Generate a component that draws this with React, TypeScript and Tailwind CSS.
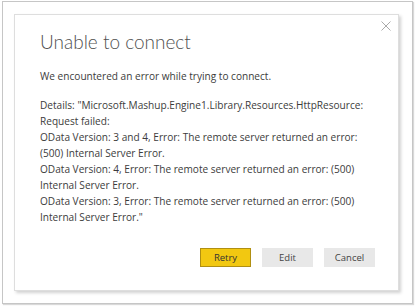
export default function App() {
    const details = [
        'Details: "Microsoft.Mashup.Engine1.Library.Resources.HttpResource:',
        'Request failed:',
        'OData Version: 3 and 4, Error: The remote server returned an error:',
        '(500) Internal Server Error.',
        'OData Version: 4, Error: The remote server returned an error: (500)',
        'Internal Server Error.',
        'OData Version: 3, Error: The remote server returned an error: (500)',
        'Internal Server Error."',
    ];

    return (
        <div className="w-[415px] h-[306px] bg-white pl-[2px] pt-px" style={{ fontFamily: '"Open Sans", "Noto Sans", sans-serif' }}>
            <div className="w-[411px] h-[303px] border border-[#c6c6c6] shadow-[1px_1px_1px_rgba(0,0,0,0.15)] pl-[11px] pt-[12px]">
                <div className="relative w-[385px] h-[277px] bg-white border border-[#dedede] shadow-[2px_2px_3px_rgba(0,0,0,0.18)] pl-[25px] pt-[13px] text-[#3c3c3c] whitespace-nowrap">
                    <button className="absolute right-[5px] top-[4px] w-[14px] h-[14px] flex items-center justify-center text-[#a0a0a0]">
                        <svg width="10" height="10" viewBox="0 0 10 10" fill="none" stroke="currentColor" strokeWidth="0.9">
                            <path d="M0.5 0.5 L9.5 9.5 M9.5 0.5 L0.5 9.5" />
                        </svg>
                    </button>
                    <h1 className="text-[19px] leading-[28px] font-light text-[#505050] font-['Lato',sans-serif]">Unable to connect</h1>
                    <p className="mt-[12px] text-[10.1px] leading-[16px]">We encountered an error while trying to connect.</p>
                    <div className="mt-[13px] text-[10.1px] leading-[16px]">
                        {details.map((line, i) => (
                            <p key={i}>{line}</p>
                        ))}
                    </div>
                    <div className="flex gap-[11px] mt-[23px] pl-[160px] text-[9.5px] text-[#333]">
                        <button className="w-[51px] h-[19px] bg-[#f2c811] border border-[#b08f12] leading-none">Retry</button>
                        <button className="w-[51px] h-[19px] bg-[#e8e8e8] leading-none text-[#444]">Edit</button>
                        <button className="w-[51px] h-[19px] bg-[#e8e8e8] leading-none text-[#444]">Cancel</button>
                    </div>
                </div>
            </div>
        </div>
    );
}
